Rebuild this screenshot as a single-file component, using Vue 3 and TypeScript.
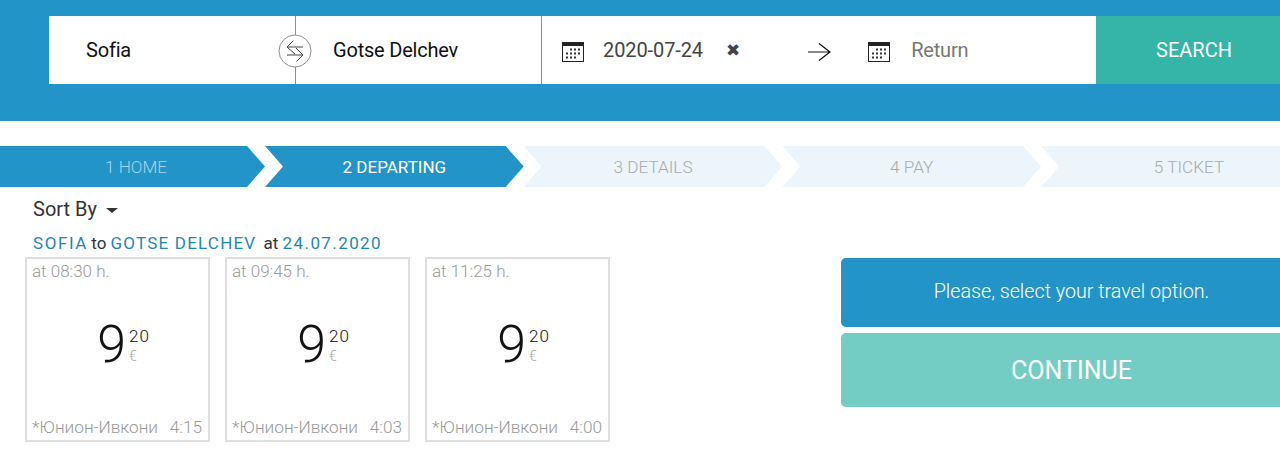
<template>
  <div class="page">
    <header class="hero">
      <div class="search">
        <div class="field from">
          <span class="city">Sofia</span>
          <span class="swap">
            <svg width="34" height="34" viewBox="0 0 34 34">
              <circle cx="17" cy="17" r="16" fill="#fff" stroke="#8f8f8f" />
              <path d="M25 13H9M15.5 6.5L9 13L17 20M9 21H25M18 14L25 21L18.5 27.5" fill="none" stroke="#444" stroke-width="1" />
            </svg>
          </span>
        </div>
        <div class="field to">
          <span class="city">Gotse Delchev</span>
        </div>
        <div class="dates">
          <svg class="cal" width="22" height="20" viewBox="0 0 22 20">
            <rect x="0.5" y="0.5" width="21" height="19" fill="#fff" stroke="#222" />
            <rect x="0" y="0" width="22" height="4" fill="#222" />
            <g fill="#333">
              <rect v-for="d in calDots" :key="d.id" :x="d.x" :y="d.y" width="2" height="2" />
            </g>
          </svg>
          <span class="date">2020-07-24</span>
          <span class="clear">✖</span>
          <svg class="arrow" width="24" height="20" viewBox="0 0 24 20">
            <path d="M1 10H23M12 1.5L23 10L12 18.5" fill="none" stroke="#111" stroke-width="1.2" />
          </svg>
          <svg class="cal" width="22" height="20" viewBox="0 0 22 20">
            <rect x="0.5" y="0.5" width="21" height="19" fill="#fff" stroke="#222" />
            <rect x="0" y="0" width="22" height="4" fill="#222" />
            <g fill="#333">
              <rect v-for="d in calDots" :key="d.id" :x="d.x" :y="d.y" width="2" height="2" />
            </g>
          </svg>
          <span class="return">Return</span>
        </div>
        <div class="go">SEARCH</div>
      </div>
    </header>

    <nav class="steps">
      <div v-for="s in steps" :key="s.label" class="step" :class="s.cls">{{ s.label }}</div>
    </nav>

    <div class="content">
      <section class="results">
        <div class="sort">Sort By <i class="caret"></i></div>
        <div class="route">
          <b>SOFIA</b> to <b>GOTSE DELCHEV</b> at <b>24.07.2020</b>
        </div>
        <div class="cards">
          <article v-for="t in trips" :key="t.time" class="card">
            <div class="time">at {{ t.time }} h.</div>
            <div class="price">
              <span class="whole">9</span>
              <span class="rest">
                <span class="cents">20</span>
                <span class="cur">€</span>
              </span>
            </div>
            <div class="meta">
              <span>*Юнион-Ивкони</span>
              <span>{{ t.dur }}</span>
            </div>
          </article>
        </div>
      </section>
      <aside class="side">
        <div class="notice">Please, select your travel option.</div>
        <div class="continue">CONTINUE</div>
      </aside>
    </div>
  </div>
</template>

<script setup lang="ts">
const steps = [
  { label: '1 HOME', cls: 'first done' },
  { label: '2 DEPARTING', cls: 'active' },
  { label: '3 DETAILS', cls: '' },
  { label: '4 PAY', cls: '' },
  { label: '5 TICKET', cls: 'last' },
]

const trips = [
  { time: '08:30', dur: '4:15' },
  { time: '09:45', dur: '4:03' },
  { time: '11:25', dur: '4:00' },
]

// calendar grid, top row starts one cell in
const calDots: { id: number; x: number; y: number }[] = []
for (let r = 0; r < 3; r++) {
  for (let c = 0; c < 4; c++) {
    if ((r === 0 && c === 0) || (r === 2 && c === 3)) continue
    calDots.push({ id: r * 4 + c, x: 4 + c * 4, y: 6.5 + r * 4 })
  }
}
</script>

<style>
html,
body {
  background: #fff;
  overflow: hidden;
}
</style>

<style scoped>
.page {
  width: 1280px;
  height: 476px;
  overflow: hidden;
  font-family: Roboto, "Noto Sans", sans-serif;
  color: #333;
}
.hero {
  height: 121px;
  background: #2394c8;
  padding: 16px 0 0 49px;
  box-sizing: border-box;
}
.search {
  display: flex;
  height: 68px;
  background: #fff;
  font-size: 20px;
}
.field {
  position: relative;
  display: flex;
  align-items: center;
  border-right: 1px solid #8f8f8f;
  box-sizing: border-box;
}
.from {
  width: 247px;
  padding-left: 37px;
}
.to {
  width: 246px;
  padding-left: 37px;
}
.city {
  color: #111;
  letter-spacing: -0.2px;
}
.swap {
  position: absolute;
  right: -17px;
  top: 18px;
  width: 34px;
  height: 34px;
  z-index: 1;
}
.swap svg {
  display: block;
}
.dates {
  width: 554px;
  display: flex;
  align-items: center;
  padding-left: 20px;
  box-sizing: border-box;
}
.cal,
.arrow {
  margin-top: 4px;
}
.date {
  margin-left: 19px;
  color: #444;
  letter-spacing: -0.1px;
}
.clear {
  margin-left: 23px;
  font-size: 17px;
  color: #444;
  font-family: "DejaVu Sans", sans-serif;
}
.arrow {
  margin-left: 67px;
}
.arrow + .cal {
  margin-left: 37px;
}
.return {
  margin-left: 21px;
  color: #777;
  letter-spacing: -0.2px;
}
.go {
  flex: 1;
  background: #34b5a7;
  color: #fff;
  display: flex;
  align-items: center;
  justify-content: center;
  padding-left: 12px;
}
.steps {
  display: flex;
  margin-top: 25px;
  height: 41px;
  font-size: 17.2px;
  font-weight: 300;
}
.step {
  flex: none;
  width: 258.7px;
  display: flex;
  align-items: center;
  justify-content: center;
  background: #ebf5fb;
  color: #aaa;
  clip-path: polygon(0 0, calc(100% - 18px) 0, 100% 50%, calc(100% - 18px) 100%, 0 100%, 18px 50%);
}
.step.first {
  width: 265px;
  padding-left: 7px;
  box-sizing: border-box;
  clip-path: polygon(0 0, calc(100% - 18px) 0, 100% 50%, calc(100% - 18px) 100%, 0 100%);
}
.step.last {
  width: 296px;
  clip-path: polygon(0 0, 100% 0, 100% 100%, 0 100%, 18px 50%);
}
.step.done {
  background: #2394c8;
  color: #a5d5ec;
}
.step.active {
  background: #2394c8;
  color: #fff;
  font-size: 17px;
  font-weight: 400;
}
.content {
  display: flex;
  justify-content: space-between;
}
.results {
  padding-left: 25px;
}
.sort {
  margin: 10px 0 0 8px;
  height: 24px;
  line-height: 24px;
  font-size: 20px;
  font-weight: 400;
  color: #333;
}
.caret {
  display: inline-block;
  width: 0;
  height: 0;
  margin-left: 4px;
  border: 6px solid transparent;
  border-top: 5px solid #333;
  border-bottom: 0;
  vertical-align: 3px;
}
.route {
  margin: 13px 0 0 8px;
  height: 23px;
  line-height: 18px;
  font-size: 17px;
  color: #333;
}
.route b {
  font-weight: 400;
  color: #1e88b0;
  letter-spacing: 1.2px;
}
.route b:first-child {
  letter-spacing: 1.6px;
  margin-right: -1px;
}
.route b:nth-child(2) {
  margin-right: 3px;
}
.route b:last-child {
  letter-spacing: 1.4px;
}
.cards {
  display: flex;
  gap: 15px;
}
.card {
  width: 185px;
  height: 185px;
  box-sizing: border-box;
  border: 2px solid #dfdfdf;
  padding: 1px 6px 1px 5px;
  display: flex;
  flex-direction: column;
  color: #999;
  font-size: 17px;
  font-weight: 300;
}
.time {
  height: 22px;
  line-height: 22px;
}
.price {
  flex: 1;
  display: flex;
  justify-content: center;
  align-items: center;
  color: #111;
  padding: 0 0 8px 13px;
  gap: 3px;
}
.whole {
  font-size: 52px;
  font-weight: 300;
  line-height: 52px;
}
.rest {
  display: flex;
  flex-direction: column;
  font-size: 17px;
  line-height: 20px;
  font-weight: 300;
  padding-top: 2px;
}
.cents {
  color: #111;
  letter-spacing: 1px;
}
.cur {
  color: #aaa;
  font-size: 14px;
}
.meta {
  display: flex;
  justify-content: space-between;
  height: 24px;
  line-height: 24px;
  font-size: 17.2px;
}
.side {
  flex: none;
  width: 461px;
  margin: 71px -22px 0 0;
  display: flex;
  flex-direction: column;
  gap: 6px;
  color: #fff;
  font-weight: 300;
}
.notice {
  height: 69px;
  background: #2394c8;
  border-radius: 5px 0 0 5px;
  display: flex;
  align-items: center;
  justify-content: center;
  font-size: 19.7px;
  padding-bottom: 3px;
  box-sizing: border-box;
}
.continue {
  height: 74px;
  background: #73cdc4;
  border-radius: 5px 0 0 5px;
  display: flex;
  align-items: center;
  justify-content: center;
  font-size: 25px;
  font-weight: 400;
}
</style>
